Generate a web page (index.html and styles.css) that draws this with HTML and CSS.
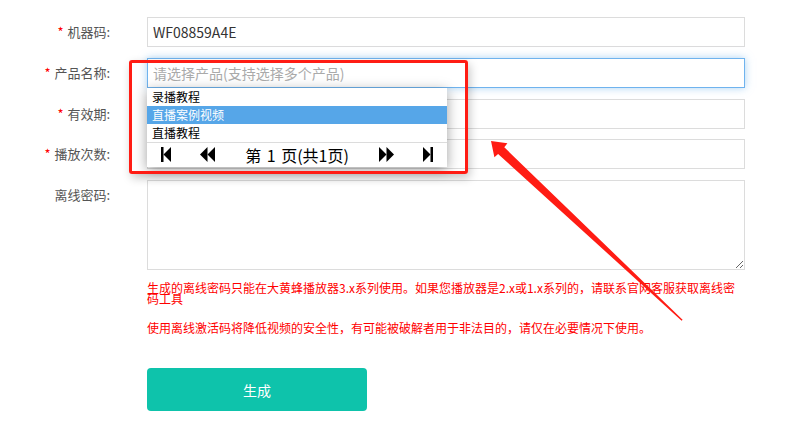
FILE: index.html
```html
<!DOCTYPE html>
<html lang="zh-CN">
<head>
<meta charset="utf-8">
<title>离线密码</title>
<link rel="stylesheet" href="styles.css">
</head>
<body>
<div class="page">
  <form class="form">
    <div class="row">
      <label class="label"><span class="req">*</span> 机器码:</label>
      <div class="field"><input class="input" type="text" value="WF08859A4E"></div>
    </div>
    <div class="row">
      <label class="label"><span class="req">*</span> 产品名称:</label>
      <div class="field">
        <input class="input focus" type="text" placeholder="请选择产品(支持选择多个产品)">
        <div class="dropdown">
          <div class="opt">录播教程</div>
          <div class="opt active">直播案例视频</div>
          <div class="opt">直播教程</div>
          <div class="pager">
            <span class="pbtn">
              <svg width="10" height="15" viewBox="0 0 10 15"><rect x="0" y="0" width="2.5" height="15" fill="#000"/><polygon points="2.5,7.5 10,0 10,15" fill="#000"/></svg>
            </span>
            <span class="pbtn">
              <svg width="15" height="15" viewBox="0 0 15 15"><polygon points="0,7.5 7.5,0 7.5,15" fill="#000"/><polygon points="7.5,7.5 15,0 15,15" fill="#000"/></svg>
            </span>
            <span class="ptext">第 1 页(共1页)</span>
            <span class="pbtn">
              <svg width="15" height="15" viewBox="0 0 15 15"><polygon points="0,0 7.5,7.5 0,15" fill="#000"/><polygon points="7.5,0 15,7.5 7.5,15" fill="#000"/></svg>
            </span>
            <span class="pbtn">
              <svg width="10" height="15" viewBox="0 0 10 15"><polygon points="0,0 7.5,7.5 0,15" fill="#000"/><rect x="7.5" y="0" width="2.5" height="15" fill="#000"/></svg>
            </span>
          </div>
        </div>
      </div>
    </div>
    <div class="row">
      <label class="label"><span class="req">*</span> 有效期:</label>
      <div class="field"><input class="input" type="text"></div>
    </div>
    <div class="row">
      <label class="label"><span class="req">*</span> 播放次数:</label>
      <div class="field"><input class="input" type="text"></div>
    </div>
    <div class="row">
      <label class="label">离线密码:</label>
      <div class="field">
        <textarea class="textarea"></textarea>
        <p class="hint first">生成的离线密码只能在大黄蜂播放器3.x系列使用。如果您播放器是2.x或1.x系列的，请联系官网客服获取离线密码工具</p>
        <p class="hint second">使用离线激活码将降低视频的安全性，有可能被破解者用于非法目的，请仅在必要情况下使用。</p>
        <button type="button" class="btn">生成</button>
      </div>
    </div>
  </form>

  <div class="mark-box"></div>
  <svg class="arrow" width="796" height="438" viewBox="0 0 796 438">
    <polygon points="491,141 494.4,157.2 498.1,153.9 681.6,320.7 682.6,319.7 504.3,147.3 507.4,143.3" fill="#ff1c14"/>
  </svg>
</div>
</body>
</html>
```

FILE: styles.css
```css
* { box-sizing: border-box; }

html, body {
  margin: 0;
  padding: 0;
  background: #fff;
}

body {
  font-family: "Noto Sans CJK SC", "Noto Sans", sans-serif;
  color: #333;
  width: 796px;
  height: 438px;
  overflow: hidden;
}

.page {
  position: relative;
  width: 796px;
  height: 438px;
}

.form {
  padding-top: 17px;
  margin: 0;
}

.row {
  display: flex;
  align-items: flex-start;
  margin-bottom: 10.75px;
}

.label {
  width: 110px;
  flex: none;
  text-align: right;
  font-size: 13px;
  line-height: 30px;
  color: #555;
}

.req {
  color: #f00;
  margin-right: 1px;
}

.field {
  position: relative;
  margin-left: 37px;
  width: 598px;
  flex: none;
}

.input {
  display: block;
  width: 598px;
  height: 30px;
  margin: 0;
  border: 1px solid #dcdcdc;
  padding: 0 5px;
  font-family: inherit;
  font-size: 14px;
  color: #333;
  outline: none;
  background: #fff;
}

.input::placeholder {
  color: #aaa;
}

.input.focus {
  border-color: #6fb3ee;
  box-shadow: 0 0 8px rgba(102, 175, 233, 0.55);
}

.dropdown {
  position: absolute;
  top: 30px;
  left: 0;
  width: 300px;
  background: #fff;
  box-shadow: 0 3px 12px rgba(0, 0, 0, 0.38);
  z-index: 5;
}

.opt {
  height: 18px;
  line-height: 18px;
  padding-left: 5px;
  font-size: 12px;
  color: #000;
}

.opt.active {
  background: #56a6e8;
  color: #fff;
}

.pager {
  display: grid;
  grid-template-columns: 38px 45px 1fr 45px 38px;
  align-items: center;
  height: 25px;
  border-top: 1px solid #dcdcdc;
}

.pbtn {
  display: flex;
  justify-content: center;
  align-items: center;
  height: 24px;
}

.pbtn svg {
  display: block;
}

.ptext {
  text-align: center;
  font-size: 16px;
  word-spacing: 2px;
  line-height: 24px;
  color: #000;
}

.textarea {
  display: block;
  width: 598px;
  height: 90px;
  margin: 0;
  border: 1px solid #dcdcdc;
  padding: 4px 5px;
  font-family: inherit;
  font-size: 14px;
  resize: vertical;
  outline: none;
}

.hint {
  margin: 0;
  font-size: 12px;
  line-height: 11px;
  color: #f00;
}

.hint.first {
  margin-top: 12px;
}

.hint.second {
  margin-top: 18px;
}

.btn {
  display: block;
  margin-top: 35px;
  width: 220px;
  height: 43px;
  border: none;
  border-radius: 4px;
  background: #0ec3ab;
  color: #fff;
  font-family: inherit;
  font-size: 14px;
  cursor: pointer;
}

.mark-box {
  position: absolute;
  left: 129px;
  top: 60px;
  width: 339px;
  height: 114px;
  border: 3px solid #ff1c14;
  border-radius: 3px;
  box-shadow: 2px 4px 10px rgba(0, 0, 0, 0.22);
  z-index: 10;
}

.arrow {
  position: absolute;
  left: 0;
  top: 0;
  z-index: 11;
  pointer-events: none;
}
```
